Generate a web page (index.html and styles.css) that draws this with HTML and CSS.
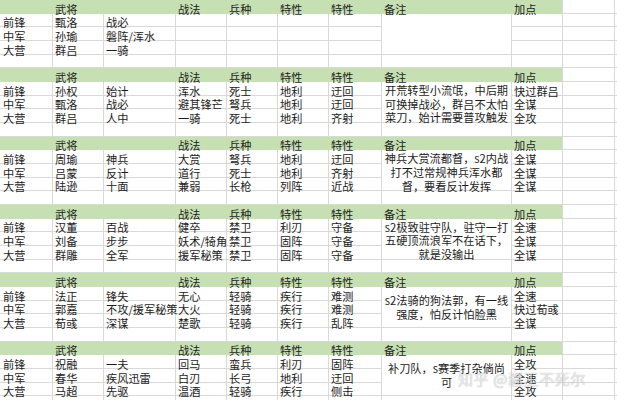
FILE: index.html
```html
<!DOCTYPE html>
<html lang="zh">
<head>
<meta charset="utf-8">
<link rel="stylesheet" href="styles.css">
</head>
<body>
<div class="wrap">
<table class="sheet">
<colgroup>
<col class="ca"><col class="cb"><col class="cc"><col class="cd"><col class="ce"><col class="cf"><col class="cg"><col class="ch"><col class="ci"><col class="cj"><col class="ck">
</colgroup>
<tbody>
<!-- block 1 -->
<tr class="hd"><td></td><td>武将</td><td></td><td>战法</td><td>兵种</td><td>特性</td><td>特性</td><td>备注</td><td class="last">加点</td><td class="w"></td><td class="w"></td></tr>
<tr><td>前锋</td><td>甄洛</td><td>战必</td><td></td><td></td><td></td><td></td><td class="note" rowspan="3"><div class="nt"></div></td><td></td><td></td><td></td></tr>
<tr><td>中军</td><td>孙瑜</td><td>磐阵/浑水</td><td></td><td></td><td></td><td></td><td></td><td></td><td></td></tr>
<tr><td>大营</td><td>群吕</td><td>一骑</td><td></td><td></td><td></td><td></td><td></td><td></td><td></td></tr>
<tr><td></td><td></td><td></td><td></td><td></td><td></td><td></td><td></td><td></td><td></td><td></td></tr>
<!-- block 2 -->
<tr class="hd"><td></td><td>武将</td><td></td><td>战法</td><td>兵种</td><td>特性</td><td>特性</td><td>备注</td><td class="last">加点</td><td class="w"></td><td class="w"></td></tr>
<tr><td>前锋</td><td>孙权</td><td>始计</td><td>浑水</td><td>死士</td><td>地利</td><td>迂回</td><td class="note" rowspan="3"><div class="nt">开荒转型小流氓，中后期<br>可换掉战必，群吕不太怕<br>菜刀，始计需要普攻触发</div></td><td>快过群吕</td><td></td><td></td></tr>
<tr><td>中军</td><td>甄洛</td><td>战必</td><td>避其锋芒</td><td>弩兵</td><td>地利</td><td>迂回</td><td>全谋</td><td></td><td></td></tr>
<tr><td>大营</td><td>群吕</td><td>人中</td><td>一骑</td><td>死士</td><td>地利</td><td>齐射</td><td>全攻</td><td></td><td></td></tr>
<tr><td></td><td></td><td></td><td></td><td></td><td></td><td></td><td></td><td></td><td></td><td></td></tr>
<!-- block 3 -->
<tr class="hd"><td></td><td>武将</td><td></td><td>战法</td><td>兵种</td><td>特性</td><td>特性</td><td>备注</td><td class="last">加点</td><td class="w"></td><td class="w"></td></tr>
<tr><td>前锋</td><td>周瑜</td><td>神兵</td><td>大赏</td><td>弩兵</td><td>地利</td><td>迂回</td><td class="note" rowspan="3"><div class="nt">神兵大赏流都督，s2内战<br>打不过常规神兵浑水都<br>督，要看反计发挥</div></td><td>全谋</td><td></td><td></td></tr>
<tr><td>中军</td><td>吕蒙</td><td>反计</td><td>道行</td><td>死士</td><td>地利</td><td>齐射</td><td>全谋</td><td></td><td></td></tr>
<tr><td>大营</td><td>陆逊</td><td>十面</td><td>兼弱</td><td>长枪</td><td>列阵</td><td>近战</td><td>全谋</td><td></td><td></td></tr>
<tr><td></td><td></td><td></td><td></td><td></td><td></td><td></td><td></td><td></td><td></td><td></td></tr>
<!-- block 4 -->
<tr class="hd"><td></td><td>武将</td><td></td><td>战法</td><td>兵种</td><td>特性</td><td>特性</td><td>备注</td><td class="last">加点</td><td class="w"></td><td class="w"></td></tr>
<tr><td>前锋</td><td>汉董</td><td>百战</td><td>健卒</td><td>禁卫</td><td>利刃</td><td>守备</td><td class="note" rowspan="3"><div class="nt">s2极致驻守队，驻守一打<br>五硬顶流浪军不在话下，<br>就是没输出</div></td><td>全速</td><td></td><td></td></tr>
<tr><td>中军</td><td>刘备</td><td>步步</td><td>妖术/犄角</td><td>禁卫</td><td>固阵</td><td>守备</td><td>全谋</td><td></td><td></td></tr>
<tr><td>大营</td><td>群雕</td><td>全军</td><td>援军秘策</td><td>禁卫</td><td>固阵</td><td>守备</td><td>全谋</td><td></td><td></td></tr>
<tr><td></td><td></td><td></td><td></td><td></td><td></td><td></td><td></td><td></td><td></td><td></td></tr>
<!-- block 5 -->
<tr class="hd"><td></td><td>武将</td><td></td><td>战法</td><td>兵种</td><td>特性</td><td>特性</td><td>备注</td><td class="last">加点</td><td class="w"></td><td class="w"></td></tr>
<tr><td>前锋</td><td>法正</td><td>锋失</td><td>无心</td><td>轻骑</td><td>疾行</td><td>难测</td><td class="note two" rowspan="3"><div class="nt">s2法骑的狗法郭，有一线<br>强度，怕反计怕脸黑</div></td><td>全速</td><td></td><td></td></tr>
<tr><td>中军</td><td>郭嘉</td><td>不攻/援军秘策</td><td>大火</td><td>轻骑</td><td>疾行</td><td>难测</td><td>快过荀彧</td><td></td><td></td></tr>
<tr><td>大营</td><td>荀彧</td><td>深谋</td><td>楚歌</td><td>轻骑</td><td>疾行</td><td>乱阵</td><td>全谋</td><td></td><td></td></tr>
<tr><td></td><td></td><td></td><td></td><td></td><td></td><td></td><td></td><td></td><td></td><td></td></tr>
<!-- block 6 -->
<tr class="hd"><td></td><td>武将</td><td></td><td>战法</td><td>兵种</td><td>特性</td><td>特性</td><td>备注</td><td class="last">加点</td><td class="w"></td><td class="w"></td></tr>
<tr><td>前锋</td><td>祝融</td><td>一夫</td><td>回马</td><td>蛮兵</td><td>利刃</td><td>固阵</td><td class="note two" rowspan="3"><div class="nt">补刀队，s赛季打杂倘尚<br>可</div></td><td>全攻</td><td></td><td></td></tr>
<tr><td>中军</td><td>春华</td><td>疾风迅雷</td><td>白刃</td><td>长弓</td><td>地利</td><td>迂回</td><td>全速</td><td></td><td></td></tr>
<tr><td>大营</td><td>马超</td><td>先驱</td><td>温酒</td><td>轻骑</td><td>疾行</td><td>侧击</td><td>全攻</td><td></td><td></td></tr>
<tr><td></td><td></td><td></td><td></td><td></td><td></td><td></td><td></td><td></td><td></td><td></td></tr>
</tbody>
</table>
<div class="watermark">知乎 @疆王不死尔</div>
</div>
</body>
</html>
```
FILE: styles.css
```css
html, body {
  margin: 0;
  padding: 0;
  background: #ffffff;
  overflow: hidden;
}
.wrap {
  position: relative;
  width: 617px;
  height: 400px;
  overflow: hidden;
}
.sheet {
  table-layout: fixed;
  border-collapse: separate;
  border-spacing: 0;
  width: 640px;
  font-family: "Noto Sans CJK SC", "Noto Sans", sans-serif;
  font-size: 11.2px;
  color: #1c1c1c;
}
.ca { width: 53px; }
.cb { width: 51px; }
.cc { width: 72px; }
.cd { width: 51px; }
.ce { width: 51px; }
.cf { width: 51px; }
.cg { width: 53px; }
.ch { width: 130px; }
.ci { width: 51px; }
.cj { width: 52px; }
.ck { width: 25px; }
.sheet tr { height: 13.68px; }
.sheet td {
  padding: 0 0 0 2px;
  border-right: 1px solid #d9d9d9;
  border-bottom: 1px solid #d9d9d9;
  white-space: nowrap;
  overflow: visible;
  line-height: 8px;
  vertical-align: bottom;
  box-sizing: border-box;
}
.sheet tr > td:first-child { padding-left: 3px; }
.sheet tr.hd td {
  background: #c6dfb3;
  border-right-color: #c6dfb3;
  border-bottom-color: #c6dfb3;
}
.sheet tr.hd td.last { border-right-color: #d9d9d9; }
.sheet tr.hd td.w {
  background: #ffffff;
  border-right-color: #d9d9d9;
  border-bottom-color: #d9d9d9;
}
.sheet td.note {
  text-align: center;
  vertical-align: top;
  line-height: 13.68px;
  padding: 2px 0 0 0;
}
.sheet td.note .nt {
  height: 37px;
  overflow: visible;
}
.sheet td.note.two { padding-top: 7px; }
.sheet td.note.two .nt { height: 30px; }
.watermark {
  position: absolute;
  left: 458px;
  top: 368px;
  font-family: "Noto Sans CJK SC", sans-serif;
  font-size: 15px;
  color: rgba(255, 255, 255, 0.7);
  text-shadow: 0 0 1px rgba(90, 90, 90, 0.3), 0 0 1px rgba(90, 90, 90, 0.3);
  letter-spacing: 0.6px;
  white-space: nowrap;
}
```
